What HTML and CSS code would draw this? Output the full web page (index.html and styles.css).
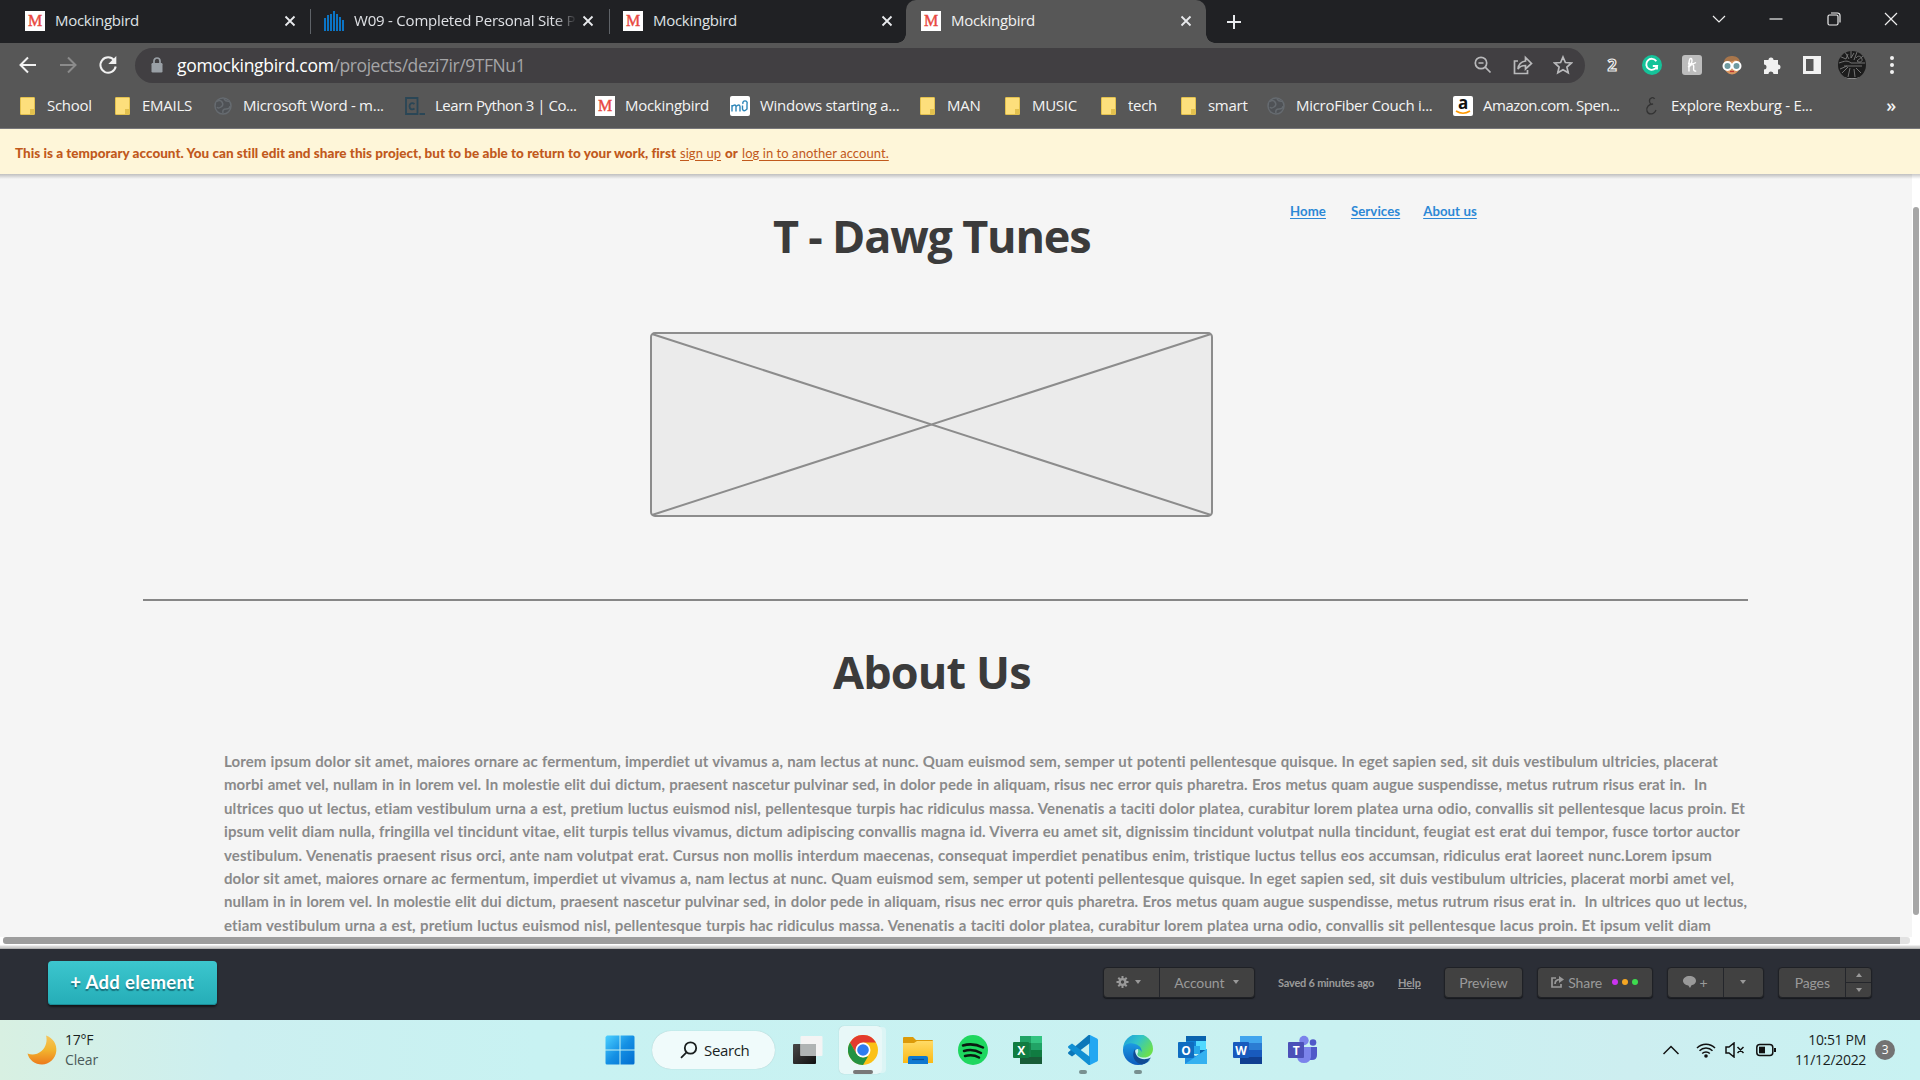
FILE: index.html
```
<!DOCTYPE html>
<html lang="en">
<head>
<meta charset="utf-8">
<title>Mockingbird</title>
<link rel="stylesheet" href="styles.css">
</head>
<body>
<header class="tabstrip">
  <div class="tab"><span class="fav">M</span><span class="tab-title">Mockingbird</span><svg class="x" viewBox="0 0 12 12"><path d="M1.500 1.500l9 9M10.500 1.500l-9 9"/></svg></div>
  <div class="tab sep"><svg class="bars" viewBox="0 0 20 20"><path d="M0 20v-13h2v13zM3 20v-16h2v16zM6 20v-17h2v17zM9 20v-20h2v20zM12 20v-17h2v17zM15 20v-14h2v14zM18 20v-11h2v11z"/></svg><span class="tab-title long">W09 - Completed Personal Site P</span><svg class="x" viewBox="0 0 12 12"><path d="M1.500 1.500l9 9M10.500 1.500l-9 9"/></svg></div>
  <div class="tab sep"><span class="fav">M</span><span class="tab-title">Mockingbird</span><svg class="x" viewBox="0 0 12 12"><path d="M1.500 1.500l9 9M10.500 1.500l-9 9"/></svg></div>
  <div class="tab active"><span class="fav">M</span><span class="tab-title">Mockingbird</span><svg class="x" viewBox="0 0 12 12"><path d="M1.500 1.500l9 9M10.500 1.500l-9 9"/></svg></div>
  <svg class="newtab" viewBox="0 0 16 16"><path d="M8 1v14M1 8h14"/></svg>
  <div class="winctl">
    <svg viewBox="0 0 14 14"><path d="M1 4l6 6 6-6"/></svg>
    <svg viewBox="0 0 14 14"><path d="M0.500 7h13"/></svg>
    <svg viewBox="0 0 14 14"><rect x="1" y="3" width="10" height="10" rx="1.500"/><path d="M4 1h6.500a2.500 2.500 0 0 1 2.500 2.500v7"/></svg>
    <svg viewBox="0 0 14 14"><path d="M1 1l12 12M13 1l-12 12"/></svg>
  </div>
</header>

<nav class="toolbar">
  <svg class="nav" viewBox="0 0 20 20"><path d="M18 10H3M10 2.500L2.500 10l7.500 7.500"/></svg>
  <svg class="nav dim" viewBox="0 0 20 20"><path d="M2 10h15M10 2.500l7.500 7.500-7.500 7.500"/></svg>
  <svg class="nav" viewBox="0 0 20 20"><path d="M16.200 5.300A7.700 7.700 0 1 0 17.700 11.500"/><path class="solid" d="M18.300 1v8h-8z"/></svg>
  <div class="omnibox">
    <svg class="lock" viewBox="0 0 12 16"><path d="M3 7V4a3 3 0 0 1 6 0v3" fill="none" stroke="#9aa0a6" stroke-width="1.700"/><rect x=".5" y="6" width="11" height="9.500" rx="1.200" fill="#9aa0a6"/></svg>
    <span class="url"><b>gomockingbird.com</b>/projects/dezi7ir/9TFNu1</span>
    <svg class="oi" viewBox="0 0 20 20"><circle cx="8" cy="8" r="5.700"/><path d="M12.200 12.200l5.300 5.300M5.500 8h5"/></svg>
    <svg class="oi" viewBox="0 0 20 20"><path d="M5 6H1.500v12.500h13V15M5 14c.5-5 3.500-7.500 7.500-8V2.500l6 6-6 5.500v-3.500c-3.500 0-6 1-7.500 3.500z"/></svg>
    <svg class="oi" viewBox="0 0 20 20"><path d="M10 2l2.400 5.500 6 .5-4.500 4 1.300 5.800L10 14.700l-5.200 3.100L6.100 12 1.600 8l6-.5z"/></svg>
  </div>
  <div class="exts">
    <svg viewBox="0 0 20 20"><text x="10" y="15.500" text-anchor="middle" class="two">2</text></svg>
    <svg viewBox="0 0 20 20"><circle cx="10" cy="10" r="10" fill="#15c39a"/><path d="M14.300 6.200A5.500 5.500 0 1 0 15 11h-4.200M15 11v3.500" fill="none" stroke="#fff" stroke-width="1.900"/></svg>
    <svg viewBox="0 0 20 20"><rect width="20" height="20" rx="3" fill="#bdbdbd"/><path d="M6 12c4-2 5-8 3-8.500S6.800 8 7 16.500M7.200 12c2-3.500 5-3 4.500 0-.4 3 0 4.500 2.500 4M6 8.500c3 .8 6 .2 8-1" fill="none" stroke="#fff" stroke-width="1.400"/></svg>
    <svg viewBox="0 0 20 20"><ellipse cx="10" cy="10.500" rx="8" ry="9" fill="#d9955f"/><path d="M2 10C1 4 5 1 10 1s9 3 8 9c-1-3-3-5-5-5-3 2-9 1-11 5z" fill="#a9764b"/><circle cx="5.500" cy="11" r="4" fill="#6f9aa0" stroke="#fff" stroke-width="2"/><circle cx="14.500" cy="11" r="4" fill="#6f9aa0" stroke="#fff" stroke-width="2"/><path d="M8 16.500h4" stroke="#b33" stroke-width="1.200"/></svg>
    <svg viewBox="0 0 20 20"><path d="M2 5h4.500a2.500 2.500 0 1 1 5 0H16v4.500a2.500 2.500 0 1 1 0 5V19h-4.500a2.500 2.500 0 0 0-5 0H2v-4.500a2.500 2.500 0 0 0 0-5z" fill="#f1f1f1"/></svg>
    <svg viewBox="0 0 20 20"><path d="M1 1h18v18H1zM4 4v12h7.500V4z" fill="#f1f1f1" fill-rule="evenodd"/></svg>
    <svg class="avatar" viewBox="0 0 28 28"><defs><clipPath id="av"><circle cx="14" cy="14" r="14"/></clipPath></defs><g clip-path="url(#av)"><path d="M0 0h28v28H0z" fill="#1c1c1c"/><path d="M1 5l7 3 2-5M7 1l4 7M13 0v7l3-5M19 1l-3 8M25 5l-6 5M1 12c6-2 8-3 12 0h14M6 15h18M2 18l7-3M4 22l6-6M10 26l2-9M17 26l-1-8M23 22l-5-5M18 7c2-3 5-2 6 1s-3 4-5 2" fill="none" stroke="#7d7d7d" stroke-width=".9"/><path d="M7 26.500q7 2 14 0v2H7z" fill="#eee"/></g></svg>
    <svg viewBox="0 0 20 20"><g fill="#f1f1f1"><circle cx="10" cy="3" r="2"/><circle cx="10" cy="10" r="2"/><circle cx="10" cy="17" r="2"/></g></svg>
  </div>
</nav>

<nav class="bookmarks">
  <span class="bm w95"><i class="folder"></i>School</span>
  <span class="bm w100"><i class="folder"></i>EMAILS</span>
  <span class="bm w192"><svg class="globe" viewBox="0 0 20 20"><circle cx="10" cy="10" r="8"/><path d="M3 6q4-3 6 0t-1 5-4 0M11 3q2 3 6 2M10 17q-1-4 3-4t4-3"/></svg>Microsoft Word - m...</span>
  <span class="bm w190 tight"><svg class="cc" viewBox="0 0 20 20"><path d="M1 2h11.500v16H1zM9.500 8C7 6 4.500 7.500 4.500 10.200S7 14.500 9.500 12.500M14.500 18h5.500"/></svg>Learn Python 3 | Co...</span>
  <span class="bm w135"><span class="fav">M</span>Mockingbird</span>
  <span class="bm w188"><svg class="mu" viewBox="0 0 20 20"><rect width="20" height="20" rx="2" fill="#fff"/><path d="M2 15.500V9M2 10.500q3.500-3 4 0v5M6 10.500q3.500-3 4 0v5M12.500 9.500V13q1 3.500 4.500 0V7.500M17 8a2.200 2.200 0 1 0-4 0" fill="none" stroke="#2e86b8" stroke-width="1.400"/></svg>Windows starting a...</span>
  <span class="bm w85"><i class="folder"></i>MAN</span>
  <span class="bm w96"><i class="folder"></i>MUSIC</span>
  <span class="bm w80"><i class="folder"></i>tech</span>
  <span class="bm w87"><i class="folder"></i>smart</span>
  <span class="bm w187"><svg class="globe" viewBox="0 0 20 20"><circle cx="10" cy="10" r="8"/><path d="M3 6q4-3 6 0t-1 5-4 0M11 3q2 3 6 2M10 17q-1-4 3-4t4-3"/></svg>MicroFiber Couch i...</span>
  <span class="bm w188 tight"><span class="amz">a<svg viewBox="0 0 16 5"><path d="M1 1q7 4.500 14 0" fill="none" stroke="#f90" stroke-width="1.600"/></svg></span>Amazon.com. Spen...</span>
  <span class="bm"><svg class="eps" viewBox="0 0 20 20"><path d="M13.500 3C13 .5 8 1.500 8.500 5.500c.3 2 2 3 3.500 2.500-4 0-7 3-6 7s7 4 9-1"/></svg>Explore Rexburg - E...</span>
  <span class="more">»</span>
</nav>

<div class="banner"><strong>This is a temporary account. You can still edit and share this project, but to be able to return to your work, first</strong><a class="su">sign up</a><strong class="or">or</strong><a>log in to another account.</a></div>

<main class="stage">
  <div class="canvas">
    <div class="hero">
      <h1>T - Dawg Tunes</h1>
      <nav class="links"><a>Home</a><a>Services</a><a>About us</a></nav>
    </div>
    <svg class="placeholder" viewBox="0 0 563 185"><rect x="1" y="1" width="561" height="183" rx="4"/><path d="M2 2l559 181M561 2L2 183"/></svg>
    <hr>
    <h2>About Us</h2>
    <div class="copy">
      <p class="l1">Lorem ipsum dolor sit amet, maiores ornare ac fermentum, imperdiet ut vivamus a, nam lectus at nunc. Quam euismod sem, semper ut potenti pellentesque quisque. In eget sapien sed, sit duis vestibulum ultricies, placerat</p>
      <p class="l2">morbi amet vel, nullam in in lorem vel. In molestie elit dui dictum, praesent nascetur pulvinar sed, in dolor pede in aliquam, risus nec error quis pharetra. Eros metus quam augue suspendisse, metus rutrum risus erat in.&nbsp; In</p>
      <p class="l3">ultrices quo ut lectus, etiam vestibulum urna a est, pretium luctus euismod nisl, pellentesque turpis hac ridiculus massa. Venenatis a taciti dolor platea, curabitur lorem platea urna odio, convallis sit pellentesque lacus proin. Et</p>
      <p class="l4">ipsum velit diam nulla, fringilla vel tincidunt vitae, elit turpis tellus vivamus, dictum adipiscing convallis magna id. Viverra eu amet sit, dignissim tincidunt volutpat nulla tincidunt, feugiat est erat dui tempor, fusce tortor auctor</p>
      <p class="l5">vestibulum. Venenatis praesent risus orci, ante nam volutpat erat. Cursus non mollis interdum maecenas, consequat imperdiet penatibus enim, tristique luctus tellus eos accumsan, ridiculus erat laoreet nunc.Lorem ipsum</p>
      <p class="l6">dolor sit amet, maiores ornare ac fermentum, imperdiet ut vivamus a, nam lectus at nunc. Quam euismod sem, semper ut potenti pellentesque quisque. In eget sapien sed, sit duis vestibulum ultricies, placerat morbi amet vel,</p>
      <p class="l7">nullam in in lorem vel. In molestie elit dui dictum, praesent nascetur pulvinar sed, in dolor pede in aliquam, risus nec error quis pharetra. Eros metus quam augue suspendisse, metus rutrum risus erat in.&nbsp; In ultrices quo ut lectus,</p>
      <p class="l8">etiam vestibulum urna a est, pretium luctus euismod nisl, pellentesque turpis hac ridiculus massa. Venenatis a taciti dolor platea, curabitur lorem platea urna odio, convallis sit pellentesque lacus proin. Et ipsum velit diam</p>
    </div>
  </div>
  <div class="vscroll"><i></i></div>
</main>
<div class="hscroll"><i></i></div>

<footer class="dock">
  <button class="add">+ Add element</button>
  <div class="group g1"><span class="c gear"><svg viewBox="0 0 12 12"><path d="M6 0v12M0 6h12M1.800 1.800l8.400 8.400M10.200 1.800l-8.400 8.400" stroke="#999" stroke-width="2"/><circle cx="6" cy="6" r="4" fill="#999"/><circle cx="6" cy="6" r="1.700" fill="#414141"/></svg><u class="dn"></u></span><span class="c acct">Account<u class="dn"></u></span></div>
  <span class="saved">Saved 6 minutes ago</span>
  <a class="help">Help</a>
  <div class="group g2"><span class="c">Preview</span></div>
  <div class="group g3"><span class="c share"><svg viewBox="0 0 13 12"><path d="M5 2H1v9h9V8M4 8c0-3 2-4.500 5-4.500" fill="none" stroke="#999" stroke-width="1.700"/><path d="M8 0l5 3.500L8 7z" fill="#999"/></svg><span>Share</span><i class="d1"></i><i class="d2"></i><i class="d3"></i></span></div>
  <div class="group g4"><span class="c note"><svg viewBox="0 0 13 12"><path d="M6.500 0C10 0 13 2 13 4.800S10.500 9 8.500 9.300L7 12 5.300 9.500C2.500 9.200 0 7.500 0 4.800S3 0 6.500 0z" fill="#999"/></svg>+</span><span class="c drop"><u class="dn"></u></span></div>
  <div class="group g5"><span class="c pages">Pages</span><span class="spin"><span><u class="up"></u></span><span><u class="dn"></u></span></span></div>
</footer>

<footer class="taskbar">
  <svg class="moon" viewBox="0 0 30 30"><defs><linearGradient id="mg" x1="0" y1="0" x2="0" y2="1"><stop offset="0" stop-color="#f6c65c"/><stop offset=".5" stop-color="#f2b42e"/><stop offset="1" stop-color="#ec7a1c"/></linearGradient></defs><path d="M19 .5C26 3 30 9 29.300 16 28.500 24 22 29.500 15 29.500 8 29.500 2 25 .5 18.500c4 1.500 9.500 1.500 14-2.500 4.500-4 6-10 4.500-15.500z" fill="url(#mg)"/></svg>
  <div class="weather"><span>17°F</span><span class="sub">Clear</span></div>
  <div class="apps">
    <span class="app"><svg viewBox="0 0 30 30"><defs><linearGradient id="wg" x1="0" y1="0" x2="1" y2="1"><stop offset="0" stop-color="#4cd0ff"/><stop offset=".5" stop-color="#1590e4"/><stop offset="1" stop-color="#006dd0"/></linearGradient></defs><path d="M2 .5h12.500v14H.5V2zM15.500.500H28q1.500 0 1.500 1.500v12.500h-14zM.5 15.500h14v14H2q-1.500 0-1.500-1.500zM15.500 15.500h14V28q0 1.500-1.500 1.500H15.500z" fill="url(#wg)"/></svg></span>
    <span class="search"><svg viewBox="0 0 18 18"><circle cx="10.500" cy="7" r="5.700"/><path d="M6.500 11.300l-5.500 5.500"/></svg>Search</span>
    <span class="app"><svg viewBox="0 0 30 30"><defs><linearGradient id="tg" x1="0" y1="0" x2="1" y2="1"><stop offset="0" stop-color="#484848"/><stop offset="1" stop-color="#111"/></linearGradient></defs><rect y="9" width="23" height="20" rx="1" fill="url(#tg)"/><rect x="7.500" y="1" width="22" height="20" rx="1" fill="#f4f4f4"/><rect x="7.500" y="9" width="15.500" height="12" fill="#b0b4b4"/></svg></span>
    <span class="app on"><svg viewBox="0 0 30 30"><circle cx="15" cy="15" r="15" fill="#fbc116"/><path d="M2 7.500A15 15 0 0 1 28 7.500H15L8.500 18.800z" fill="#e33b2e"/><path d="M2 7.500L8.500 18.800Q11 22 15 22.500l5-1L15 30A15 15 0 0 1 2 7.500z" fill="#229342"/><circle cx="15" cy="15" r="7.500" fill="#fff"/><circle cx="15" cy="15" r="5.800" fill="#2f7cf0"/></svg></span>
    <span class="app"><svg viewBox="0 0 30 30"><defs><linearGradient id="fg" x1="0" y1="0" x2="0" y2="1"><stop offset="0" stop-color="#ffdb67"/><stop offset="1" stop-color="#fbb915"/></linearGradient></defs><path d="M0 3q0-1 1-1h9l3 3h16q1 0 1 1v8H0z" fill="#dc9a09"/><path d="M0 8h11l3-2h16v22H0z" fill="url(#fg)"/><path d="M5 29v-6q0-2 2-2h16q2 0 2 2v6z" fill="#0f78d0"/><path d="M9 24.500h12" stroke="#0b4f98" stroke-width="1.200"/></svg></span>
    <span class="app"><svg viewBox="0 0 30 30"><circle cx="15" cy="15" r="15" fill="#1ed75f"/><path d="M5 10.500q10-3 20 2M6 16q9-2.500 17 2M7 21q8-2 14 1.500" fill="none" stroke="#0a1a10" stroke-width="2.500" stroke-linecap="round"/></svg></span>
    <span class="app"><svg viewBox="0 0 30 30"><path d="M7 1h22v28H7z" fill="#185c37"/><path d="M7 1h11v21H7z" fill="#21a366"/><path d="M18 1h11v7H18z" fill="#33c481"/><path d="M18 8h11v7H18z" fill="#21a366"/><path d="M18 15h11v7H18z" fill="#107c41"/><path d="M7 8h11v14H7z" fill="#17804a"/><rect y="7" width="16" height="16" rx="1" fill="#107c41"/><text x="8" y="19.500" class="ltr">X</text></svg></span>
    <span class="app run"><svg viewBox="0 0 30 30"><path d="M22 0l7 3.500q1 .5 1 1.500v20q0 1-1 1.500L22 30l-1-5V7z" fill="#23a7f2"/><path d="M22 0v8L4 21.500.5 19q-1-1 0-2L20 .5q1-1 2-.5z" fill="#0c77b9"/><path d="M22 30v-8L4 8.500.5 11q-1 1 0 2L20 29.500q1 1 2 .5z" fill="#118fd3"/></svg></span>
    <span class="app run"><svg viewBox="0 0 30 30"><defs><linearGradient id="e1" x1="0" y1="0" x2="1" y2=".6"><stop offset="0" stop-color="#1a9ae0"/><stop offset=".5" stop-color="#32c4c8"/><stop offset="1" stop-color="#6be04d"/></linearGradient><linearGradient id="e2" x1="0" y1="0" x2="0" y2="1"><stop offset="0" stop-color="#1c9be2"/><stop offset="1" stop-color="#0c5bbd"/></linearGradient></defs><path d="M0 14A15 15 0 0 1 30 14c0 6-5 8.500-9 8.500-5 0-8-2-6-5 1-4-2-8-7-8-4 0-7 2-8 4.500z" fill="url(#e1)"/><path d="M0 14C1 9 7 7 12 9c5 1.500 7 4.500 6.500 8-1-3.500-5-4-6.500-1-3 6 3 13 15 9-3 3.500-7 5-12 5A15 15 0 0 1 0 14z" fill="url(#e2)"/><path d="M12 14c-4 6-1 14 7 15.500 4-1 7-4 9-7-8 4-16 1-16-8.500z" fill="#114b94"/></svg></span>
    <span class="app"><svg viewBox="0 0 30 30"><path d="M8 1h20v18H8z" fill="#0a63ae"/><path d="M8 6h10v9H8z" fill="#0f7fd4"/><path d="M18 6h10v9H18z" fill="#50d9ff"/><path d="M15 11h7v8h-7z" fill="#28a8ea"/><path d="M7 17l11 4 11-7v15H7z" fill="#1e8fe0"/><path d="M7 29L29 14v15z" fill="#35b1f0"/><rect y="7" width="16" height="16" rx="1" fill="#0f6cc0"/><text x="8" y="19.500" class="ltr">O</text></svg></span>
    <span class="app"><svg viewBox="0 0 30 30"><path d="M7 1h22v7H7z" fill="#41a5ee"/><path d="M7 8h22v7H7z" fill="#2b7cd3"/><path d="M7 15h22v7H7z" fill="#185abd"/><path d="M7 22h22v7H7z" fill="#103f91"/><rect y="7" width="16" height="16" rx="1" fill="#185abd"/><text x="8" y="19.500" class="ltr">W</text></svg></span>
    <span class="app"><svg viewBox="0 0 30 30"><circle cx="25" cy="7.500" r="3.300" fill="#5059c9"/><path d="M19 12h10v8q0 5-5 5h-5z" fill="#5059c9"/><circle cx="16" cy="5.500" r="4.700" fill="#7b83eb"/><path d="M9 12h14v10q-1 6-7 6t-7-6z" fill="#7b83eb"/><rect y="7" width="16" height="16" rx="1" fill="#4b50b8"/><text x="8" y="19.500" class="ltr">T</text></svg></span>
  </div>
  <div class="tray">
    <svg class="t1" viewBox="0 0 16 10"><path d="M.5 9L8 1.500 15.500 9"/></svg>
    <svg class="t2" viewBox="0 0 20 16"><path d="M1 6a12.500 12.500 0 0 1 18 0M3.500 8.800a9 9 0 0 1 13 0M6.200 11.500a5.400 5.400 0 0 1 7.600 0"/><circle cx="10" cy="14" r="1.800" fill="#111" stroke="none"/></svg>
    <svg class="t3" viewBox="0 0 20 16"><path d="M1 5v6h3l5 4V1L4 5zM12.500 5l6 6M18.500 5l-6 6"/></svg>
    <svg class="t4" viewBox="0 0 20 14"><rect x=".8" y="1.500" width="16" height="11" rx="3"/><rect x="3" y="3.700" width="6" height="6.600" fill="#111" stroke="none"/><path d="M19 5v4" stroke-width="2"/></svg>
    <div class="clock"><span>10:51 PM</span><span>11/12/2022</span></div>
    <span class="badge">3</span>
  </div>
</footer>
</body>
</html>
```
FILE: styles.css
```
* { box-sizing: border-box; }
body { margin: 0; width: 1920px; height: 1080px; overflow: hidden; display: flex; flex-direction: column; background: #fff; font: 15px "Open Sans", sans-serif; letter-spacing: -0.28px; }
svg { flex: none; display: block; }

/* tab strip */
.tabstrip { height: 43px; flex: none; background: #202124; display: flex; align-items: center; color: #dfe1e5; }
.tab { width: 299px; height: 43px; padding: 0 14px 1px 14px; display: flex; align-items: center; position: relative; }
.tab:first-child { width: 309px; padding: 0 13px 1px 25px; }
.tab.sep { border-left: 1px solid transparent; background: linear-gradient(#5f6368, #5f6368) 0 9px / 1px 25px no-repeat; }
.tab.active { width: 300px; margin-left: -1px; padding-left: 15px; background: #575757; border-radius: 10px 10px 0 0; color: #f1f1f1; }
.tab.active::before, .tab.active::after { content: ""; position: absolute; bottom: 0; width: 9px; height: 9px; }
.tab.active::before { left: -9px; background: radial-gradient(circle at 0 0, transparent 8.500px, #575757 9px); }
.tab.active::after { right: -9px; background: radial-gradient(circle at 100% 0, transparent 8.500px, #575757 9px); }
.fav { flex: none; width: 20px; height: 20px; background: #fff; color: #e8473f; font: 16px/20px "Liberation Serif", serif; -webkit-text-stroke: 0.400px #e8473f; text-align: center; letter-spacing: 0; }
.bars { width: 20px; height: 20px; fill: #0b74c4; }
.tab-title { flex: 1; margin-left: 10px; white-space: nowrap; line-height: 22px; padding-bottom: 2px; }
.tab-title.long { letter-spacing: -0.210px; -webkit-mask-image: linear-gradient(90deg, #000 200px, transparent 223px); mask-image: linear-gradient(90deg, #000 200px, transparent 223px); }
.x { width: 12px; height: 12px; stroke: #e8eaed; stroke-width: 1.800; }
.newtab { width: 16px; height: 16px; margin-left: 20px; stroke: #e8eaed; stroke-width: 2; }
.winctl { margin-left: auto; margin-right: 22px; display: flex; gap: 43.500px; padding-bottom: 6px; }
.winctl svg { width: 14px; height: 14px; fill: none; stroke: #eee; stroke-width: 1.200; }

/* toolbar */
.toolbar { height: 45px; flex: none; background: #575757; display: flex; align-items: center; padding: 0 0 1px 18px; }
.nav { width: 20px; height: 20px; margin-right: 20px; fill: none; stroke: #f1f1f1; stroke-width: 2; }
.nav.dim { stroke: #8b8b8b; }
.nav:nth-child(3) { margin-right: 17px; }
.nav .solid { fill: #f1f1f1; stroke: none; }
.omnibox { width: 1450px; height: 35px; border-radius: 18px; background: #413f42; display: flex; align-items: center; padding: 0 12px 0 16px; }
.lock { width: 12px; height: 16px; }
.url { flex: 1; margin-left: 14px; font-size: 17.500px; letter-spacing: -0.440px; color: #a5a5a7; }
.url b { font-weight: 400; color: #fff; letter-spacing: -0.300px; }
.oi { width: 20px; height: 20px; margin-left: 20px; fill: none; stroke: #b9b9bb; stroke-width: 1.700; }
.exts { display: flex; align-items: center; gap: 20px; margin-left: 17px; }
.exts svg { width: 20px; height: 20px; overflow: visible; }
.exts .avatar { width: 28px; height: 28px; margin: 0 -4px; }
.two { font: 700 16px "Open Sans", sans-serif; fill: #444; stroke: #eee; stroke-width: 1.200px; }

/* bookmarks */
.bookmarks { height: 41px; flex: none; background: #575757; border-bottom: 1px solid #77777b; display: flex; align-items: center; padding: 0 24px 7px 18px; color: #f4f4f4; }
.bm { display: flex; align-items: center; white-space: nowrap; line-height: 22px; }
.bm.tight { letter-spacing: -0.480px; }
.bm > :first-child { flex: none; width: 20px; height: 20px; margin-right: 10px; position: relative; top: 1px; }
.bm .folder { width: 15px; height: 18px; margin: 0 12px 0 2px; background: #fddf7c; border: 1px solid #e3c14e; border-radius: 1px; background-image: linear-gradient(#e3c14e, #e3c14e); background-size: 4px 5px; background-position: 100% 100%; background-repeat: no-repeat; }
.w80 { width: 80px; } .w85 { width: 85px; } .w87 { width: 87px; } .w95 { width: 95px; } .w96 { width: 96px; } .w100 { width: 100px; }
.w135 { width: 135px; } .w187 { width: 187px; } .w188 { width: 188px; } .w190 { width: 190px; } .w192 { width: 192px; }
.globe { fill: #4f5256; stroke: #666b70; stroke-width: 1.500; }
.cc { fill: none; stroke: #2a4656; stroke-width: 1.800; }
.eps { fill: none; stroke: #333; stroke-width: 1.300; }
.amz { background: #fff; border-radius: 2px; color: #111; font: 700 17px/14px "Open Sans", sans-serif; text-align: center; }
.amz svg { width: 16px; height: 5px; margin: 0 auto; }
.more { margin-left: auto; font-size: 18px; font-weight: 600; line-height: 22px; }

/* notice */
.banner { height: 45px; flex: none; background: #fef6d9; color: #c1591c; font: 700 13.500px Lato, sans-serif; letter-spacing: 0.010px; display: flex; align-items: center; padding: 2px 0 0 15px; white-space: nowrap; }
.banner strong:first-child { width: 665px; }
.banner a { font-weight: 400; font-size: 13px; letter-spacing: 0.060px; text-decoration: underline; text-underline-offset: 2px; }
.banner .su { width: 45px; }
.banner .or { width: 17px; }

/* canvas */
.stage { height: 763px; flex: none; display: flex; overflow: hidden; }
.canvas { width: 1912px; background: linear-gradient(#bfbfbf, #f5f5f5 5px); }
.hero { height: 158px; display: flex; padding-left: 773px; }
h1, h2 { margin: 0; font: 700 45px/60px "Open Sans", sans-serif; color: #3b3b3b; white-space: nowrap; }
h1 { width: 517px; letter-spacing: -1.200px; padding-top: 32px; }
.links { display: flex; padding-top: 27px; font: 700 13.200px/20px Lato, sans-serif; letter-spacing: 0.080px; color: #2c88d6; }
.links a { text-decoration: underline; text-underline-offset: 2px; white-space: nowrap; }
.links a:nth-child(1) { margin-right: 25px; }
.links a:nth-child(2) { margin-right: 23px; }
.placeholder { width: 563px; height: 185px; margin-left: 650px; fill: #ebebeb; stroke: #8c8c8c; stroke-width: 2; }
hr { width: 1605px; height: 2px; margin: 82px 0 0 143px; border: 0; background: #868686; }
h2 { padding-left: 833px; margin-top: 41px; letter-spacing: -0.850px; }
.copy { margin: 48px 0 0 224px; color: #8a8a8a; font: 700 15px/23.400px Lato, sans-serif; letter-spacing: 0.110px; }
.copy p { margin: 0; height: 23.400px; text-align: justify; text-align-last: justify; }
.l1 { width: 1494px; } .l2 { width: 1483px; letter-spacing: 0.040px; } .l3 { width: 1521px; } .l4 { width: 1516px; }
.l5 { width: 1488px; } .l6 { width: 1510px; letter-spacing: 0.060px; } .l7 { width: 1523px; letter-spacing: 0.040px; } .l8 { width: 1487px; }
.vscroll { width: 8px; background: linear-gradient(#c9c9c9, #fff 5px); padding: 33px 0 0 1px; }
.vscroll i { display: block; width: 6px; height: 708px; border-radius: 3px; background: #a6a6a6; }
.hscroll { height: 12px; flex: none; padding: 0 0 0 3px; background: linear-gradient(#fff 8px, #ddd 9px, #c9c9c9 11px, #999 12px); }
.hscroll i { display: block; width: 1907px; height: 7px; border-radius: 3px; background: linear-gradient(90deg, #9d9d9d 1897px, #e2e2e2 1897px); }

/* editor bar */
.dock { height: 71px; flex: none; background: #2b2e36; display: flex; align-items: center; padding: 0 48px 5px; font: 14px Lato, sans-serif; letter-spacing: -0.120px; color: #9a9a9a; }
.add { width: 169px; height: 44px; margin: 0 886px 0 0; padding: 0 0 2px; border: 0; border-radius: 4px; background: linear-gradient(#3cc6ce, #25adb7); box-shadow: inset 0 -1px #1a8d98, 0 2px 2px #15171b; color: #fff; font: 700 18.500px Lato, sans-serif; letter-spacing: 0.350px; text-shadow: 0 2px 1px #16717b; white-space: nowrap; position: relative; top: 1px; }
.group { display: flex; height: 31px; border: 1px solid #1f2126; border-radius: 4px; background: #414141; box-shadow: 0 1px 1px #17191d; }
.c { display: flex; align-items: center; justify-content: center; flex: 1; }
.c + .c, .spin { border-left: 1px solid #24262b; }
.group svg { width: 13px; height: 12px; }
.dn, .up { border: 3px solid transparent; border-bottom: 0; border-top: 4px solid #999; margin-left: 6px; }
.up { border-top: 0; border-bottom: 4px solid #999; }
.g1 { width: 153px; }
.gear { flex: none; width: 55px; }
.gear svg { margin-left: -5px; }
.acct .dn { margin-left: 9px; }
.saved { width: 96px; margin-left: 23px; font-weight: 700; font-size: 11px; letter-spacing: -0.230px; white-space: nowrap; }
.help { width: 22px; margin-left: 24px; font-size: 11px; font-weight: 700; text-decoration: underline; }
.g2 { width: 79px; margin-left: 24px; }
.g3 { width: 116px; margin-left: 14px; }
.share span { margin: 0 6px 0 4px; }
.share i { width: 6px; height: 6px; border-radius: 3px; margin-left: 4px; }
.d1 { background: #cb33f0; } .d2 { background: #f5a623; } .d3 { background: #3ddc4e; }
.g4 { width: 98px; margin-left: 14px; }
.note { flex: none; width: 55px; gap: 4px; }
.drop .dn { margin: 0; }
.g5 { width: 94px; margin-left: 14px; }
.pages { flex: none; width: 66px; }
.spin { flex: 1; display: flex; flex-direction: column; }
.spin span { flex: 1; display: flex; align-items: center; justify-content: center; }
.spin span + span { border-top: 1px solid #24262b; }
.spin u { margin: 0; }

/* taskbar */
.taskbar { height: 60px; flex: none; display: flex; align-items: center; background: linear-gradient(90deg, #d8f0e2, #cceff0 12%, #c8f2f2 28%, #c9f1f1 70%, #cdeef0 85%, #c8f2f2); color: #1a1f1f; }
.moon { width: 30px; height: 30px; margin-left: 27px; }
.weather { width: 538px; padding-left: 8px; display: flex; flex-direction: column; font-size: 14px; line-height: 20px; }
.weather .sub { color: #4a5a5a; letter-spacing: -0.140px; }
.apps { display: flex; align-items: center; }
.app { width: 55px; height: 48px; display: flex; align-items: center; justify-content: center; position: relative; }
.app svg { width: 30px; height: 30px; }
.app:first-child { width: 49px; }
.ltr { font: 700 12px "Open Sans", sans-serif; fill: #fff; text-anchor: middle; }
.on::before { content: ""; position: absolute; left: 4px; top: 0; width: 43px; height: 48px; border-radius: 5px; background: #e8f8f8; box-shadow: 5px 0 0 -1px #dcf5f5, 0 0 1px #9bb; }
.on svg { position: relative; }
.on::after, .run::after { content: ""; position: absolute; bottom: 0; left: 18px; width: 20px; height: 4px; border-radius: 2px; background: #787878; }
.run::after { left: 24px; width: 8px; background: #789090; }
.search { width: 123px; height: 38px; margin: 0 5px 0 8px; border-radius: 19px; background: #f0fbfb; box-shadow: 0 0 1px #9bb; display: flex; align-items: center; padding-left: 28px; letter-spacing: -0.350px; }
.search svg { width: 18px; height: 18px; margin-right: 6px; fill: none; stroke: #1a1f1f; stroke-width: 1.800; }
.tray { flex: 1; display: flex; align-items: center; justify-content: flex-end; padding-right: 25px; }
.tray svg { fill: none; stroke: #111; stroke-width: 1.500; }
.t1 { width: 16px; height: 10px; margin-right: 17px; }
.t2 { width: 20px; height: 16px; margin-right: 9px; }
.t3 { width: 20px; height: 16px; margin-right: 11px; }
.t4 { width: 20px; height: 14px; margin-right: 15px; }
.clock { width: 75px; display: flex; flex-direction: column; text-align: right; font-size: 14px; line-height: 20px; letter-spacing: -0.320px; }
.badge { width: 20px; height: 20px; margin-left: 9px; border-radius: 10px; background: #737373; color: #fff; font-size: 12px; line-height: 20px; text-align: center; }
```
